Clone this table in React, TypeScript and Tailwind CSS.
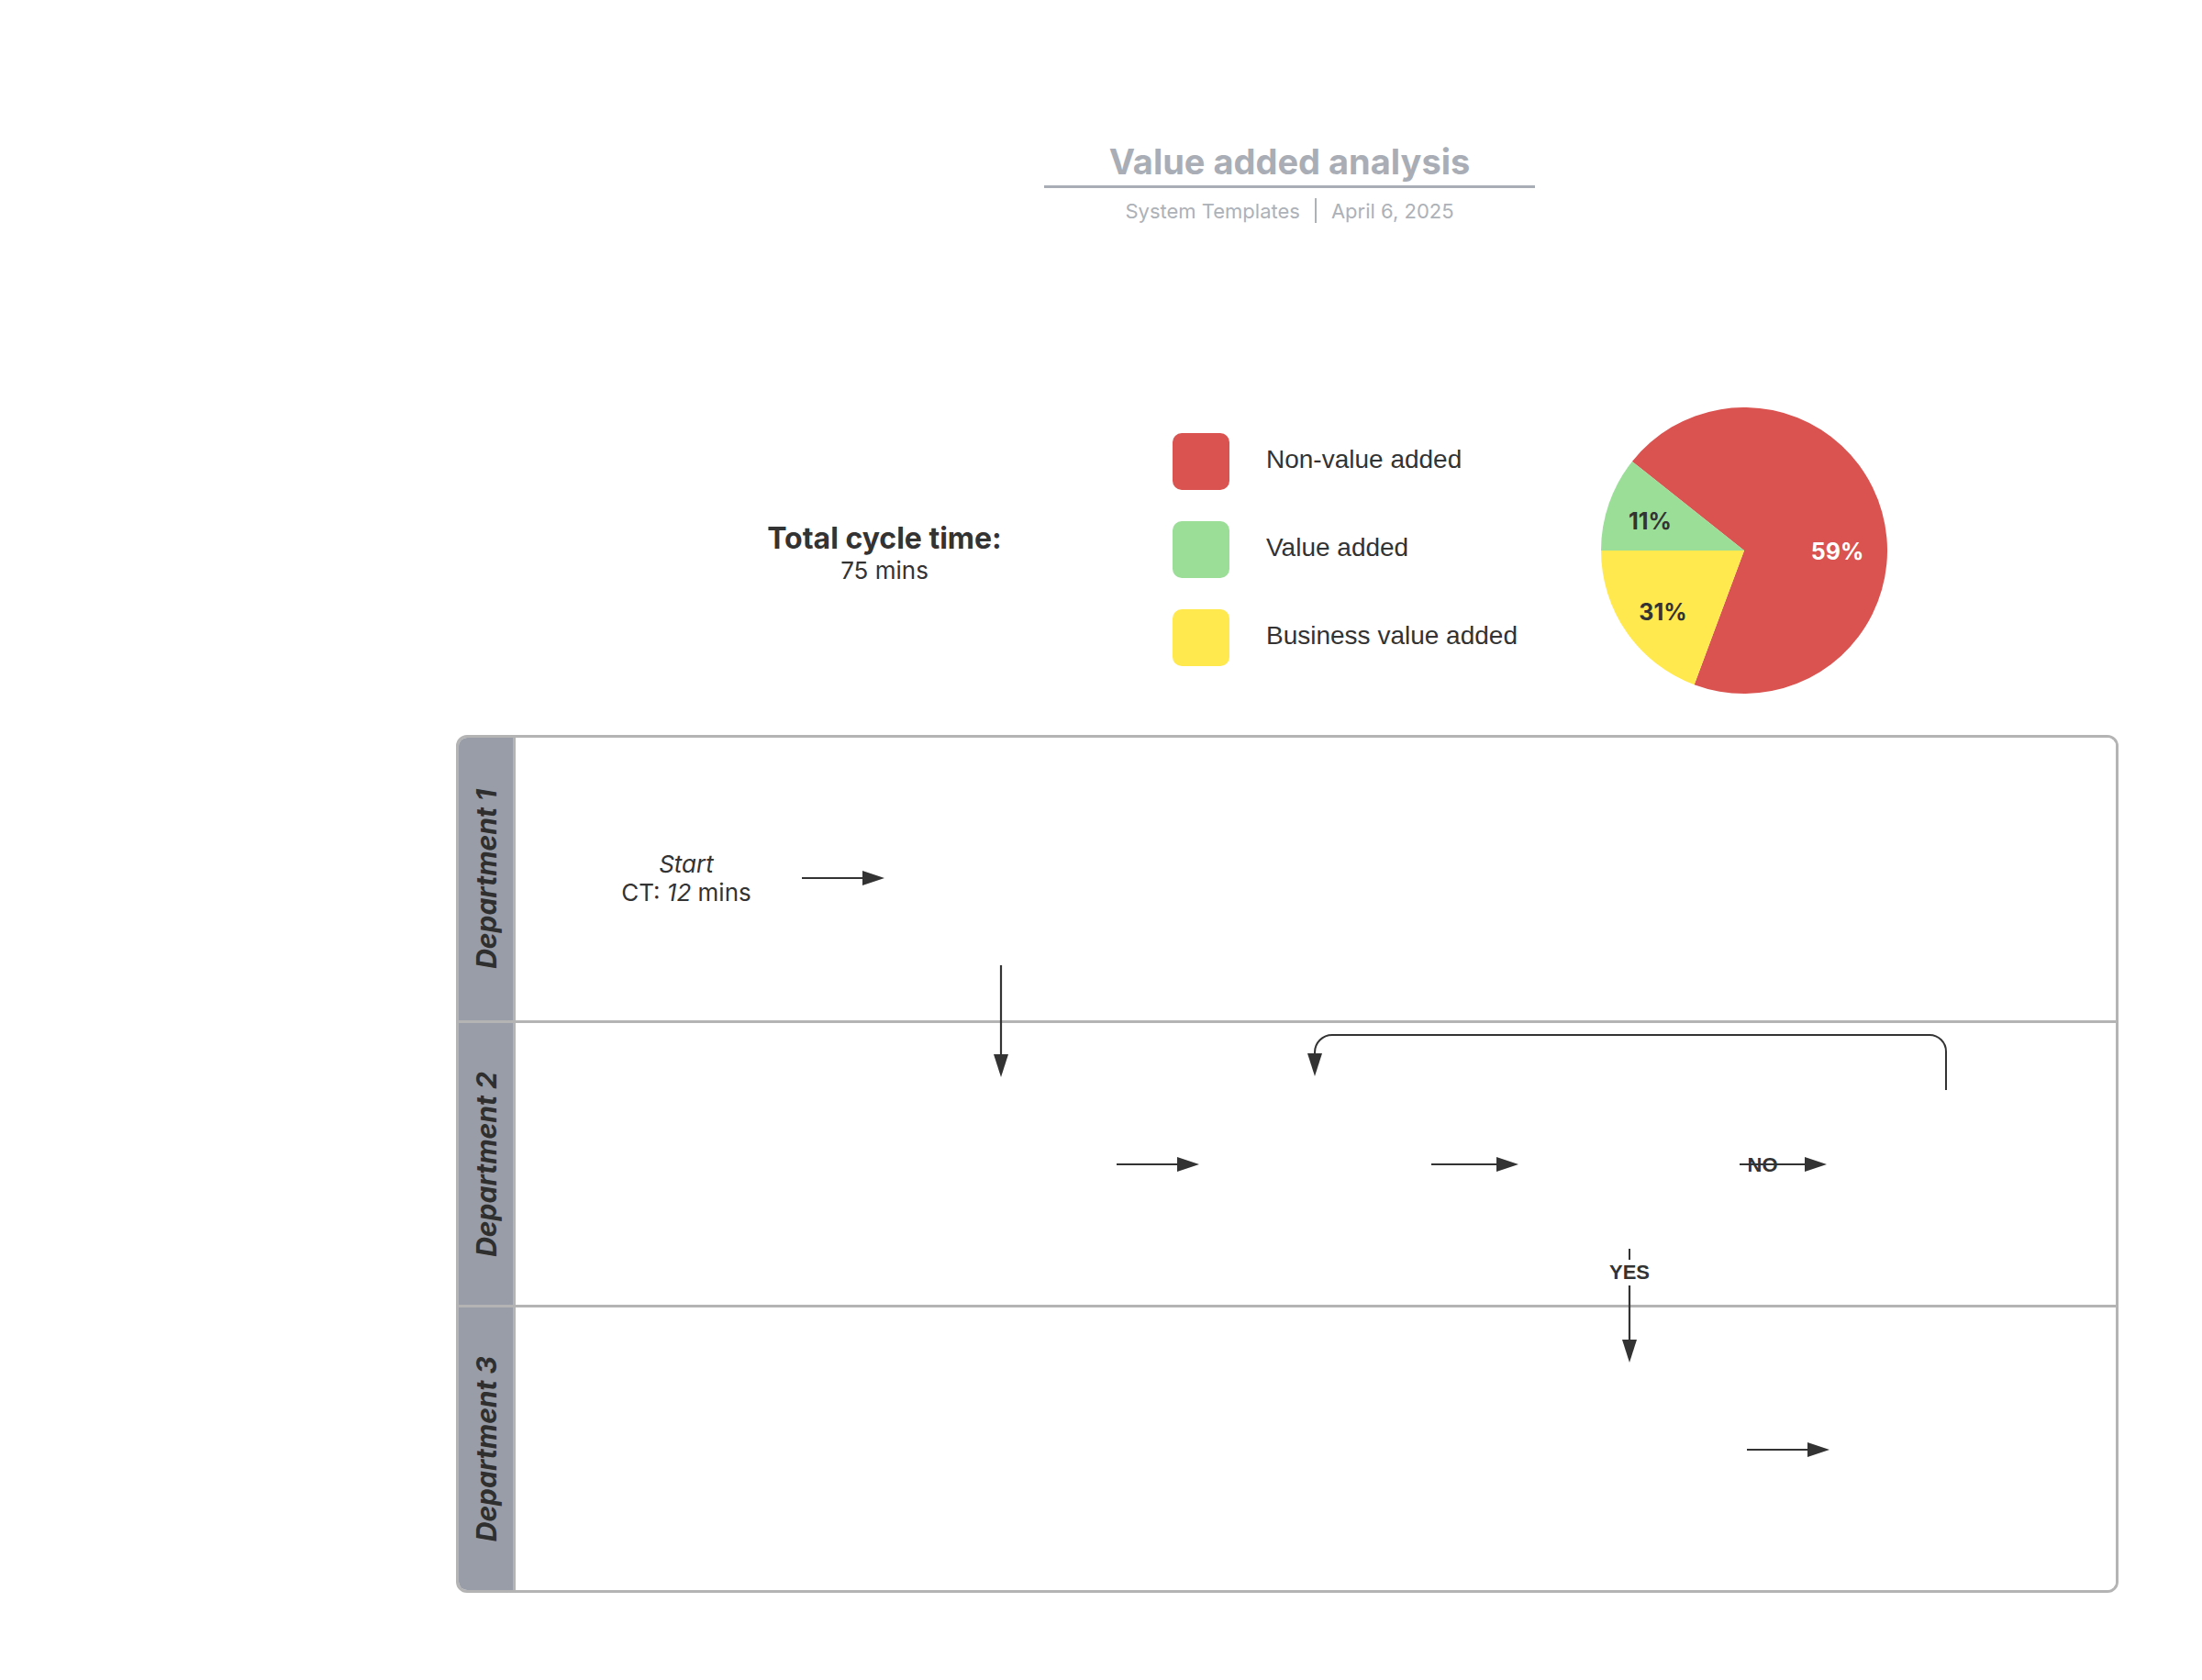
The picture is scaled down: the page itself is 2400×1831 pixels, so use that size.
import React from "react";

const INK = "#333333";

function ArrowRight({ x1, x2, y }: { x1: number; x2: number; y: number }) {
  return (
    <g>
      <line x1={x1} y1={y} x2={x2 - 22} y2={y} stroke={INK} strokeWidth={2.2} />
      <polygon points={`${x2 - 24},${y - 8} ${x2},${y} ${x2 - 24},${y + 8}`} fill={INK} />
    </g>
  );
}

function ArrowDown({ x, y1, y2 }: { x: number; y1: number; y2: number }) {
  return (
    <g>
      <line x1={x} y1={y1} x2={x} y2={y2 - 22} stroke={INK} strokeWidth={2.2} />
      <polygon points={`${x - 8},${y2 - 25} ${x},${y2} ${x + 8},${y2 - 25}`} fill={INK} />
    </g>
  );
}

function Pie() {
  return (
    <svg width={312} height={312} viewBox="0 0 312 312" className="shrink-0">
      <path d="M156,156 L33.9,58.9 A156,156 0 1 1 101.6,302.2 Z" fill="#da5350" />
      <path d="M156,156 L0,156 A156,156 0 0 1 33.9,58.9 Z" fill="#9ade98" />
      <path d="M156,156 L101.6,302.2 A156,156 0 0 1 0,156 Z" fill="#ffe94f" />
      <text x={53.5} y={124} textAnchor="middle" dominantBaseline="central" fontFamily="Inter, sans-serif" fontWeight={700} fontSize={25} fill="#333">11%</text>
      <text x={257.5} y={157} textAnchor="middle" dominantBaseline="central" fontFamily="Inter, sans-serif" fontWeight={700} fontSize={25} fill="#ffffff">59%</text>
      <text x={67.5} y={223} textAnchor="middle" dominantBaseline="central" fontFamily="Inter, sans-serif" fontWeight={700} fontSize={25} fill="#333">31%</text>
    </svg>
  );
}

function LegendItem({ color, label }: { color: string; label: string }) {
  return (
    <div className="flex items-center gap-[40px]">
      <div className={`w-[62px] h-[62px] rounded-[10px] ${color}`} />
      <span className="mb-[4px] font-['Liberation_Sans',Arial,sans-serif] text-[28px] leading-[32px] text-[#333]">{label}</span>
    </div>
  );
}

function Lane({ label, first }: { label: string; first?: boolean }) {
  return (
    <div className={`flex-1 flex ${first ? "" : "border-t-[3px] border-[#b4b4b4]"}`}>
      <div className="w-[62px] shrink-0 bg-[#989da7] border-r-[3px] border-[#b4b4b4] flex items-center justify-center">
        <span className="[writing-mode:vertical-rl] rotate-180 text-[30px] leading-none font-bold italic text-[#2f2f2f] whitespace-nowrap">
          {label}
        </span>
      </div>
      <div className="flex-1 bg-white" />
    </div>
  );
}

export default function App() {
  return (
    <div className="w-[2400px] h-[1831px] bg-white font-['Inter',sans-serif] text-[#333] overflow-hidden">
      {/* Header */}
      <div className="pt-[153px] ml-[1138px] w-[535px] flex flex-col items-center">
        <h1 className="text-[38px] leading-[47px] font-bold text-[#a9aeb6]">Value added analysis</h1>
        <div className="mt-[2px] h-[3px] w-full bg-[#a9aeb6]" />
        <div className="mt-[11px] flex items-center text-[22px] leading-[26px] text-[#adb1b8]">
          <span>System Templates</span>
          <span className="mx-[16px] w-[2px] h-[27px] bg-[#adb1b8]" />
          <span>April 6, 2025</span>
        </div>
      </div>

      {/* Summary row */}
      <div className="mt-[201px] h-[312px] flex items-center pl-[814px]">
        <div className="w-[300px] pt-[4px] text-center">
          <div className="text-[32px] leading-[40px] font-bold text-[#333]">Total cycle time:</div>
          <div className="text-[26px] leading-[30px] text-[#333]">75 mins</div>
        </div>
        <div className="ml-[164px] w-[467px] flex flex-col gap-[34px] -mt-[3px]">
          <LegendItem color="bg-[#da5350]" label="Non-value added" />
          <LegendItem color="bg-[#9ade98]" label="Value added" />
          <LegendItem color="bg-[#ffe94f]" label="Business value added" />
        </div>
        <Pie />
      </div>

      {/* Swimlanes */}
      <div className="mt-[45px] ml-[497px] w-[1812px] h-[935px] border-[3px] border-[#b4b4b4] rounded-[12px] overflow-hidden relative flex flex-col">
        <Lane label="Department 1" first />
        <Lane label="Department 2" />
        <Lane label="Department 3" />

        <div className="absolute -left-[3px] -top-[3px] w-[1812px] h-[935px] pointer-events-none">
          <svg width={1812} height={935} className="absolute left-0 top-0">
            <ArrowRight x1={377} x2={467} y={156} />
            <ArrowDown x={594} y1={251} y2={373} />
            <ArrowRight x1={720} x2={810} y={468} />
            <ArrowRight x1={1063} x2={1158} y={468} />
            <ArrowRight x1={1399} x2={1494} y={468} />
            <path
              d="M1624,387 V345 A18,18 0 0 0 1606,327 H955 A19,19 0 0 0 936,346 V352"
              fill="none"
              stroke={INK}
              strokeWidth={2}
            />
            <polygon points="928,347 936,372 944,347" fill={INK} />
            <line x1={1279} y1={560} x2={1279} y2={572} stroke={INK} strokeWidth={2} />
            <ArrowDown x={1279} y1={600} y2={684} />
            <ArrowRight x1={1407} x2={1497} y={779} />
          </svg>

          <div className="absolute left-[151px] top-[125px] w-[200px] text-center text-[26px] leading-[31px] text-[#333]">
            <div className="italic">Start</div>
            <div>
              CT: <span className="italic">12</span> mins
            </div>
          </div>

          <div className="absolute left-[1384px] top-[455px] w-[80px] text-center font-['Liberation_Sans',Arial,sans-serif] font-bold text-[22px] leading-[28px] text-[#333]">
            NO
          </div>
          <div className="absolute left-[1239px] top-[572px] w-[80px] text-center font-['Liberation_Sans',Arial,sans-serif] font-bold text-[22px] leading-[28px] text-[#333]">
            YES
          </div>
        </div>
      </div>
    </div>
  );
}
